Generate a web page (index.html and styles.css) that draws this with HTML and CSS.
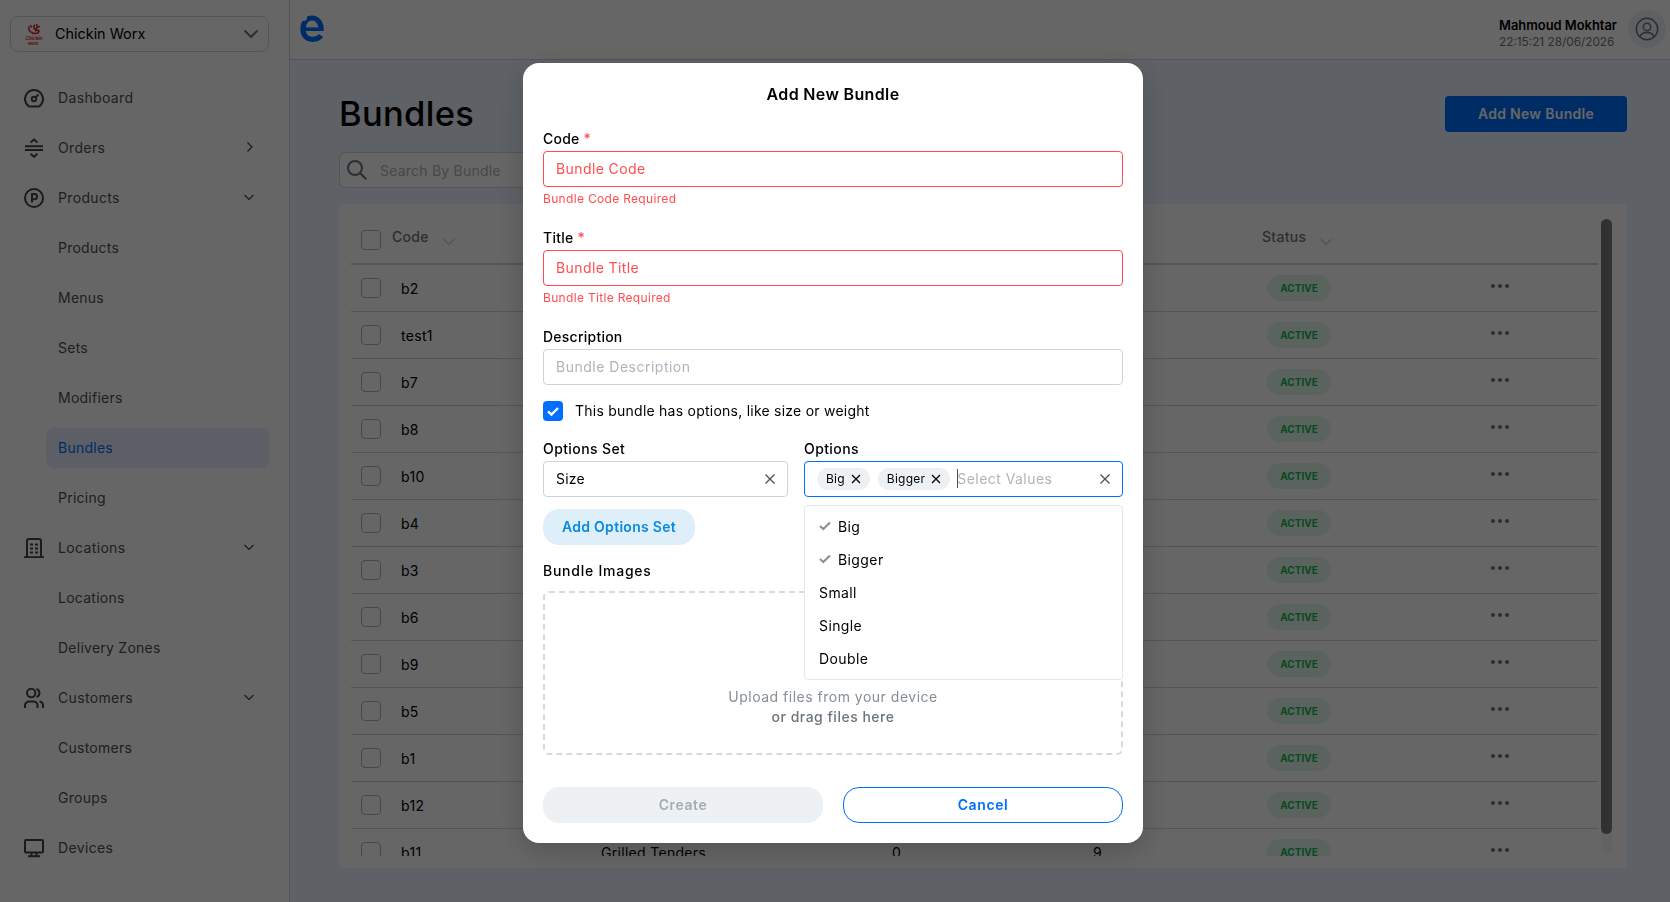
FILE: index.html
```html
<!DOCTYPE html>
<html lang="en">

<head>
    <meta charset="UTF-8">
    <title>Bundles</title>
    <link rel="stylesheet" href="styles.css">
</head>

<body>
    <div class="layout">
        <aside class="sidebar">
            <div class="brand-select">
                <svg class="brand-logo" width="18" height="22" viewBox="0 0 18 22">
                    <path d="M4 3.500C3 6 4.500 9 7 9.500M5 2.500L7 4M10 2C8 3.500 8.500 6 10.500 6C12 5 12.500 3 11.500 1M7 9.500C9 11 13.500 11 14 8.500C14 7 12 6.500 10 8M13 4L15 3.500" fill="none" stroke="#d8222c" stroke-width="1.600" />
                    <text x="0.500" y="17" class="brand-text">Chickin</text>
                    <text x="3" y="21.500" class="brand-text brand-text-small">Worx</text>
                </svg>
                <span class="brand-name">Chickin Worx</span>
                <svg width="16" height="10" viewBox="0 0 16 10"><path d="M1.500 1.500L8 8L14.500 1.500" fill="none" stroke="#6c757d" stroke-width="2" /></svg>
            </div>
            <nav class="nav">
                <a class="nav-item">
                    <svg class="nav-icon" viewBox="0 0 20 20"><path d="M5 18.500A9 9 0 1 1 15 18.500Z" /><circle cx="10" cy="11" r="2.200" /><path d="M11.500 9.500L14.500 6.500" /></svg>
                    <span>Dashboard</span>
                </a>
                <a class="nav-item">
                    <svg class="nav-icon" viewBox="0 0 20 20"><path d="M1 8.200H19M1 12H19M6.500 4.500L10 1.500L13.500 4.500M6.500 15.800L10 18.800L13.500 15.800" /></svg>
                    <span>Orders</span>
                    <svg class="nav-arrow" viewBox="0 0 10 10"><path d="M3.500 0.500L8 5L3.500 9.500" /></svg>
                </a>
                <a class="nav-item">
                    <svg class="nav-icon" viewBox="0 0 20 20"><circle cx="10" cy="10" r="9" /><path d="M8 14.500V6H10.500A2.600 2.600 0 0 1 10.500 11.200H8" /></svg>
                    <span>Products</span>
                    <svg class="nav-arrow" viewBox="0 0 10 10"><path d="M0.500 3L5 7.500L9.500 3" /></svg>
                </a>
                <a class="nav-item nav-sub">Products</a>
                <a class="nav-item nav-sub">Menus</a>
                <a class="nav-item nav-sub">Sets</a>
                <a class="nav-item nav-sub">Modifiers</a>
                <a class="nav-item nav-sub active">Bundles</a>
                <a class="nav-item nav-sub">Pricing</a>
                <a class="nav-item">
                    <svg class="nav-icon" viewBox="0 0 20 20"><path d="M0 19.200H20M3 19V3A2 2 0 0 1 5 1H15A2 2 0 0 1 17 3V19" /><path d="M6 6.500H9M11 6.500H14M6 10.500H9M11 10.500H14M6 14.500H9M11 14.500H14" /></svg>
                    <span>Locations</span>
                    <svg class="nav-arrow" viewBox="0 0 10 10"><path d="M0.500 3L5 7.500L9.500 3" /></svg>
                </a>
                <a class="nav-item nav-sub">Locations</a>
                <a class="nav-item nav-sub">Delivery Zones</a>
                <a class="nav-item">
                    <svg class="nav-icon" viewBox="0 0 20 20"><circle cx="7.200" cy="5" r="4.200" /><path d="M1 20V17.500A4 4 0 0 1 5 13.500H9.500A4 4 0 0 1 13.500 17.500V20M12.500 1A4.200 4.200 0 0 1 12.500 9M15.500 13.500A4 4 0 0 1 19 17.500V20" /></svg>
                    <span>Customers</span>
                    <svg class="nav-arrow" viewBox="0 0 10 10"><path d="M0.500 3L5 7.500L9.500 3" /></svg>
                </a>
                <a class="nav-item nav-sub">Customers</a>
                <a class="nav-item nav-sub">Groups</a>
                <a class="nav-item">
                    <svg class="nav-icon" viewBox="0 0 20 20"><rect x="1" y="2" width="18" height="12.500" rx="1" /><path d="M7.500 14.500V18M12.500 14.500V18M4 18.200H16" /></svg>
                    <span>Devices</span>
                </a>
            </nav>
        </aside>

        <div class="main">
            <header class="topbar">
                <svg class="logo" width="24" height="28" viewBox="0 0 24 28" fill="none" stroke="#006eff">
                    <path d="M21.200 16C21.500 8 17.500 3 12 3C6.500 3 3 8 3 14C3 20.500 6.500 24.300 12.500 24.300C16.500 24.300 19.200 23 21 20.500" stroke-width="5.200" />
                    <path d="M4 14.200H22" stroke-width="3.600" />
                    <circle cx="3.500" cy="2.500" r="3.500" fill="#fff" stroke="none" />
                </svg>
                <div class="user">
                    <div class="user-text">
                        <div class="user-name">Mahmoud Mokhtar</div>
                        <div class="user-date">22:15:21 28/06/2026</div>
                    </div>
                    <div class="avatar">
                        <svg width="24" height="24" viewBox="0 0 24 24" fill="none" stroke="#6c757d" stroke-width="1.500"><circle cx="12" cy="12" r="10.700" /><circle cx="12" cy="10" r="3.700" /><path d="M5 20C6 16.500 9 15.500 12 15.500S18 16.500 19 20" /></svg>
                    </div>
                </div>
            </header>

            <div class="content">
                <div class="page-head">
                    <h1>Bundles</h1>
                    <button class="add-button">Add New Bundle</button>
                </div>
                <div class="search">
                    <svg width="20" height="20" viewBox="0 0 20 20" fill="none" stroke="#6c757d" stroke-width="2"><circle cx="8" cy="8" r="7" /><path d="M13 13L19.300 19.300" /></svg>
                    <span>Search By Bundle</span>
                </div>
                <div class="card">
                    <div class="table" id="table">
                        <div class="row table-head">
                            <span class="box"></span>
                            <span class="code">Code <svg class="sort" viewBox="0 0 12 8"><path d="M0.500 1L6 6.500L11.500 1" /></svg></span>
                            <span></span>
                            <span></span>
                            <span></span>
                            <span class="status">Status <svg class="sort" viewBox="0 0 12 8"><path d="M0.500 1L6 6.500L11.500 1" /></svg></span>
                            <span></span>
                        </div>
                    </div>
                    <div class="scrollbar"><div class="thumb"></div></div>
                </div>
            </div>
        </div>
    </div>

    <div class="overlay">
        <form class="modal">
            <h2>Add New Bundle</h2>

            <div class="field invalid">
                <label>Code <span class="star">*</span></label>
                <div class="control">Bundle Code</div>
                <div class="error-message">Bundle Code Required</div>
            </div>
            <div class="field invalid">
                <label>Title <span class="star">*</span></label>
                <div class="control">Bundle Title</div>
                <div class="error-message">Bundle Title Required</div>
            </div>
            <div class="field">
                <label>Description</label>
                <div class="control placeholder">Bundle Description</div>
            </div>

            <div class="check-line">
                <span class="checked"><svg width="20" height="20" viewBox="0 0 20 20"><path d="M5 10.500L8.500 13.500L15 7" fill="none" stroke="#fff" stroke-width="2.400" /></svg></span>
                <span class="check-text">This bundle has options, like size or weight</span>
            </div>

            <div class="options">
                <div class="field">
                    <label>Options Set</label>
                    <div class="control">
                        <span>Size</span>
                        <svg class="close" viewBox="0 0 10 10"><path d="M0.500 0.500L9.500 9.500M9.500 0.500L0.500 9.500" /></svg>
                    </div>
                </div>
                <div class="field">
                    <label>Options</label>
                    <div class="control focused">
                        <span class="tag">Big <svg viewBox="0 0 10 10"><path d="M1 1L9 9M9 1L1 9" /></svg></span>
                        <span class="tag">Bigger <svg viewBox="0 0 10 10"><path d="M1 1L9 9M9 1L1 9" /></svg></span>
                        <span class="values">Select Values</span>
                        <svg class="close" viewBox="0 0 10 10"><path d="M0.500 0.500L9.500 9.500M9.500 0.500L0.500 9.500" /></svg>
                    </div>
                    <div class="dropdown">
                        <div class="option"><svg width="12" height="10" viewBox="0 0 12 10"><path d="M1 5L4.300 8L11 1.500" /></svg>Big</div>
                        <div class="option"><svg width="12" height="10" viewBox="0 0 12 10"><path d="M1 5L4.300 8L11 1.500" /></svg>Bigger</div>
                        <div class="option">Small</div>
                        <div class="option">Single</div>
                        <div class="option">Double</div>
                    </div>
                </div>
            </div>

            <button type="button" class="set-button">Add Options Set</button>

            <label class="images-label">Bundle Images</label>
            <div class="dropzone">
                <div>Upload files from your device</div>
                <div class="drag">or drag files here</div>
            </div>

            <div class="actions">
                <button type="button" class="create" disabled>Create</button>
                <button type="button" class="cancel">Cancel</button>
            </div>
        </form>
    </div>

    <script src="script.js"></script>
</body>

</html>
```

FILE: styles.css
```css
* {
    box-sizing: border-box;
}

body {
    margin: 0;
    height: 902px;
    overflow: hidden;
    font-family: Inter, sans-serif;
    font-size: 14px;
    color: #000;
}

button {
    font-family: inherit;
    font-size: 14px;
    font-weight: 600;
    letter-spacing: 0.3px;
    height: 36px;
    border: none;
    padding: 0 0 2px;
}

svg {
    flex: none;
}

.layout {
    display: flex;
    height: 902px;
}

/* Sidebar */
.sidebar {
    width: 290px;
    padding: 16px 20px 0 10px;
    border-right: 1px solid #ced4da;
}

.brand-select {
    display: flex;
    align-items: center;
    height: 36px;
    padding: 0 9px 0 14px;
    border: 1px solid #ced4da;
    border-radius: 8px;
}

.brand-name {
    flex: 1;
    margin-left: 12px;
    padding-bottom: 1px;
    font-size: 14.4px;
}

.brand-text {
    font-size: 4.6px;
    font-style: italic;
    font-weight: 700;
    fill: #d8222c;
}

.brand-text-small {
    font-size: 4px;
}

.nav {
    display: flex;
    flex-direction: column;
    gap: 10px;
    margin-top: 26px;
}

.nav-item {
    display: flex;
    align-items: center;
    height: 40px;
    padding: 0 15px 2px 14px;
    color: #495057;
    letter-spacing: 0.35px;
}

.nav-item span {
    flex: 1;
}

.nav-icon {
    width: 20px;
    height: 20px;
    margin-right: 14px;
    position: relative;
    top: 1px;
    fill: none;
    stroke: #444;
    stroke-width: 2;
}

.nav-arrow {
    width: 10px;
    height: 10px;
    fill: none;
    stroke: #444;
    stroke-width: 1.2;
}

.nav-sub {
    margin-left: 36px;
    padding-left: 12px;
    border-radius: 8px;
    letter-spacing: 0.25px;
}

.nav-sub.active {
    background-color: #e7edff;
    color: #006eff;
}

/* Header */
.main {
    flex: 1;
    display: flex;
    flex-direction: column;
    background-color: #ebf3ff;
}

.topbar {
    display: flex;
    justify-content: space-between;
    height: 60px;
    padding: 10px 4px 0 10px;
    border-bottom: 1px solid #ced4da;
    background-color: #fff;
}

.logo {
    margin-top: 5px;
}

.user {
    display: flex;
}

.user-text {
    width: 129px;
    padding-top: 7px;
    font-size: 12.9px;
    line-height: 17px;
}

.user-name {
    font-weight: 600;
}

.user-date {
    color: #6c757d;
    font-size: 11.8px;
}

.avatar {
    display: flex;
    align-items: center;
    justify-content: center;
    width: 38px;
    height: 38px;
    border-radius: 50%;
    background-color: #edf1f4;
}

/* Page */
.content {
    padding: 36px 43px 0 49px;
}

.page-head {
    display: flex;
    justify-content: space-between;
    height: 56px;
}

h1 {
    margin: -3px 0 0;
    font-size: 34.5px;
    font-weight: 500;
    letter-spacing: 0.3px;
    line-height: 42px;
}

.add-button {
    width: 182px;
    border-radius: 4px;
    background-color: #006eff;
    color: #fff;
}

.search {
    display: flex;
    align-items: center;
    gap: 13px;
    width: 330px;
    height: 36px;
    padding: 0 7px;
    border: 1px solid #ced4da;
    border-radius: 6px;
    background-color: #fff;
    color: #adb5bd;
    letter-spacing: 0.22px;
}

.card {
    display: flex;
    height: 664px;
    margin-top: 16px;
    padding: 12px 15px 12px 12px;
    border-radius: 4px;
    background-color: #fff;
}

.table {
    width: 1247px;
    overflow: hidden;
}

.row {
    display: grid;
    grid-template-columns: 20px 220px 291px 201px 169px 208px 1fr;
    align-items: center;
    height: 47px;
    padding-left: 10px;
    border-bottom: 1px solid #ced4da;
    letter-spacing: 0.3px;
}

.table-head {
    height: 49px;
    border-bottom: 2px solid #c9ddd7;
    color: #6c757d;
    font-weight: 500;
}

.box {
    width: 20px;
    height: 20px;
    border: 1px solid #adb5bd;
    border-radius: 4px;
}

.code {
    padding-left: 20px;
}

.table-head .code {
    padding: 0 0 5px 11px;
}

.table-head .status {
    padding: 0 0 5px;
}

.sort {
    width: 12px;
    height: 8px;
    margin-left: 10px;
    vertical-align: -4px;
    fill: none;
    stroke: #ced4da;
    stroke-width: 1.5;
}

.status {
    padding-left: 5px;
}

.badge {
    display: inline-block;
    width: 64px;
    height: 26px;
    border-radius: 13px;
    background-color: #e4f7ed;
    color: #12b755;
    font-size: 10px;
    font-weight: 700;
    letter-spacing: 0;
    line-height: 26px;
    text-align: center;
}

.dots {
    display: flex;
    gap: 3px;
    margin-left: 21px;
    padding-bottom: 4px;
}

.dots i {
    width: 4px;
    height: 4px;
    border-radius: 50%;
    background-color: #6c757d;
}

.scrollbar {
    width: 11px;
    height: 634px;
    margin: 3px 0 0 3px;
    border-radius: 6px;
    background-color: #f5f5f5;
}

.thumb {
    height: 615px;
    border-radius: 6px;
    background-color: #7b7b7b;
}

/* Modal */
.overlay {
    position: fixed;
    inset: 0;
    display: flex;
    justify-content: center;
    align-items: flex-start;
    padding: 63px 4px 0 0;
    background-color: rgba(0, 0, 0, 0.6);
}

.modal {
    width: 620px;
    height: 780px;
    padding: 20px;
    border-radius: 16px;
    background-color: #fff;
    box-shadow: 0 8px 30px rgba(0, 0, 0, 0.2);
    letter-spacing: 0.24px;
}

h2 {
    margin: -1px 0 22px;
    font-size: 16px;
    font-weight: 600;
    letter-spacing: 0.35px;
    line-height: 24px;
    text-align: center;
}

label {
    display: block;
    height: 22px;
    margin-bottom: 1px;
    font-weight: 500;
    line-height: 22px;
}

.star {
    color: #ff4d4f;
}

.field {
    position: relative;
}

.control {
    display: flex;
    align-items: center;
    height: 36px;
    padding: 0 12px 1px;
    border: 1px solid #ced4da;
    border-radius: 4px;
}

.placeholder {
    color: #adb5bd;
    letter-spacing: 0.5px;
}

.invalid {
    margin-bottom: 18px;
}

.invalid .control {
    border-color: #ff4d4f;
    color: #ff4d4f;
    letter-spacing: 0.4px;
}

.error-message {
    height: 20px;
    margin-top: 2px;
    color: #ff4d4f;
    font-size: 12px;
    letter-spacing: 0.32px;
    line-height: 20px;
}

.check-line {
    display: flex;
    align-items: center;
    gap: 12px;
    height: 20px;
    margin: 16px 0 17px;
}

.check-text {
    padding-bottom: 1px;
}

.checked {
    height: 20px;
    border-radius: 4px;
    background-color: #006eff;
}

.options {
    display: grid;
    grid-template-columns: 245px 319px;
    gap: 16px;
}

.options label {
    letter-spacing: 0.4px;
}

.close {
    width: 10px;
    height: 10px;
    margin-left: auto;
    fill: none;
    stroke: #495057;
    stroke-width: 1.3;
}

.focused {
    border-color: #006eff;
}

.tag {
    display: flex;
    align-items: center;
    gap: 6px;
    height: 22px;
    margin-right: 8px;
    padding: 0 9px;
    border-radius: 11px;
    background-color: #edf1f4;
    font-size: 12px;
}

.tag svg {
    width: 10px;
    height: 10px;
    stroke: #000;
    stroke-width: 1.3;
}

.values {
    border-left: 1px solid #495057;
    margin-left: -1px;
    color: #adb5bd;
    line-height: 19px;
    letter-spacing: 0.45px;
    text-indent: -1px;
}

.dropdown {
    position: absolute;
    top: 67px;
    left: 0;
    width: 319px;
    height: 175px;
    padding: 4px 14px;
    border: 1px solid #e4e7ea;
    border-radius: 4px;
    background-color: #fff;
    letter-spacing: 0.4px;
}

.option {
    display: flex;
    align-items: center;
    gap: 7px;
    height: 33px;
    padding-bottom: 1px;
}

.option svg {
    fill: none;
    stroke: #909090;
    stroke-width: 2.2;
}

.set-button {
    display: block;
    width: 152px;
    margin: 12px 0 15px;
    border-radius: 16px;
    background-color: #dfeffa;
    color: #078ae2;
}

.images-label {
    margin-bottom: 9px;
    letter-spacing: 0.75px;
}

.dropzone {
    height: 164px;
    padding-top: 94px;
    border: 2px dashed #d5dade;
    border-radius: 6px;
    color: #868e96;
    letter-spacing: 0.5px;
    line-height: 20px;
    text-align: center;
}

.drag {
    color: #6c757d;
    font-weight: 500;
}

.actions {
    display: grid;
    grid-template-columns: 1fr 1fr;
    gap: 20px;
    margin-top: 32px;
}

.actions button {
    border-radius: 16px;
    letter-spacing: 0.6px;
}

.create {
    background-color: #edf1f4;
    color: #a3adb6;
}

.cancel {
    border: 1px solid #006eff;
    background-color: #fff;
    color: #006eff;
}
```

FILE: script.js
```js
var bundles = [
    ["b2"], ["test1"], ["b7"], ["b8"], ["b10"], ["b4"], ["b3"],
    ["b6"], ["b9"], ["b5"], ["b1"], ["b12"],
    ["b11", "Grilled Tenders", "0", "9"]
];

var table = document.getElementById("table");

bundles.forEach(function (bundle) {
    var row = document.createElement("div");
    row.className = "row";
    row.innerHTML =
        '<span class="box"></span>' +
        '<span class="code">' + bundle[0] + '</span>' +
        '<span>' + (bundle[1] || "") + '</span>' +
        '<span>' + (bundle[2] || "") + '</span>' +
        '<span>' + (bundle[3] || "") + '</span>' +
        '<span class="status"><span class="badge">ACTIVE</span></span>' +
        '<span class="dots"><i></i><i></i><i></i></span>';
    table.appendChild(row);
});
```
